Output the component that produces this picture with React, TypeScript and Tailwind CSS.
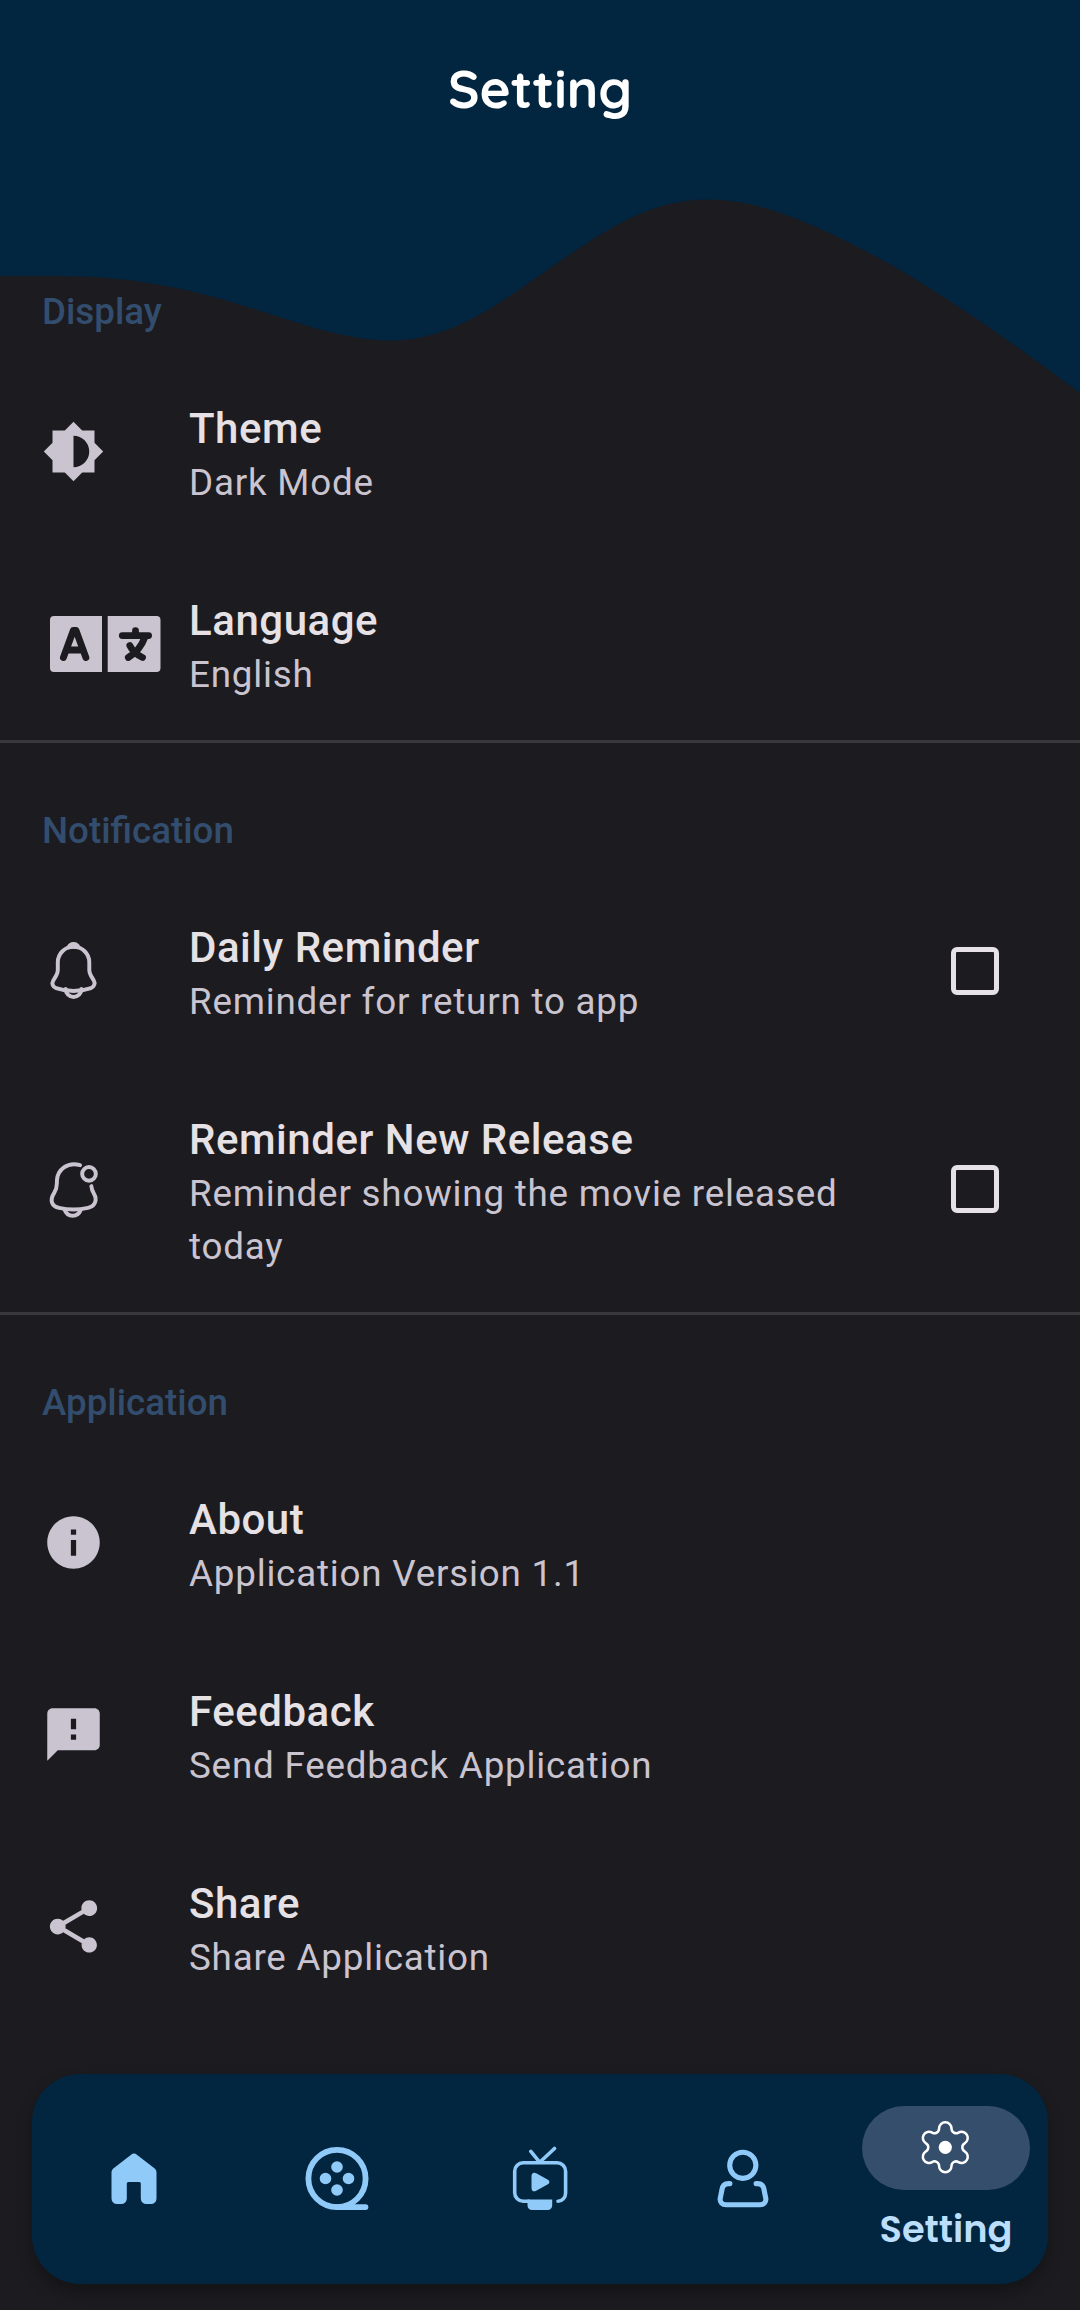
import React from "react";
import { MdBrightnessMedium, MdInfo, MdFeedback, MdShare } from "react-icons/md";

const ICON = "#cac4d0";

function Bell() {
  return (
    <svg width="63" height="63" viewBox="0 0 24 24" fill="none" stroke={ICON} strokeWidth="1.5" strokeLinecap="round" strokeLinejoin="round">
      <path d="M12.02 2.91c-3.31 0-6 2.69-6 6v2.89c0 .61-.26 1.54-.57 2.06L4.3 15.77c-.71 1.18-.22 2.49 1.08 2.93 4.31 1.44 8.96 1.44 13.27 0 1.21-.4 1.74-1.83 1.08-2.93l-1.15-1.91c-.3-.52-.56-1.45-.56-2.06V8.91c0-3.3-2.7-6-6-6z" />
      <path d="M13.87 3.2a6.754 6.754 0 0 0-3.7 0c.29-.74 1.01-1.26 1.85-1.26.84 0 1.56.52 1.85 1.26zM15.02 19.06c0 1.65-1.35 3-3 3-.82 0-1.58-.34-2.12-.88a3.01 3.01 0 0 1-.88-2.12" />
    </svg>
  );
}

function BellDot() {
  return (
    <svg width="63" height="63" viewBox="0 0 24 24" fill="none" stroke={ICON} strokeWidth="1.5" strokeLinecap="round">
      <path d="M14.5 2.75C9.600 1.300 6 4.600 5.700 8.400C5.600 10.500 5.900 11.300 4.700 13.200C2.700 16.300 3.800 18.400 6.500 19C10.200 19.800 13.800 19.800 17.500 19C20.200 18.400 21.200 16 19.800 13.600C19 12.300 18.900 11.800 18.800 10.700" />
      <circle cx="17.900" cy="6.050" r="2.600" />
      <path d="M8.600 19.700C9.100 21.200 10.200 22 11.700 22S14.200 21.200 14.800 19.700" />
    </svg>
  );
}

function Language() {
  return (
    <svg width="111" height="56" viewBox="0 0 111 56">
      <path fill={ICON} d="M4 0H52V56H4a4 4 0 0 1-4-4V4a4 4 0 0 1 4-4ZM57.700 0H106.500a4 4 0 0 1 4 4v48a4 4 0 0 1-4 4H57.700Z" />
      <g fill="none" stroke="#1c1b1f" strokeWidth="6.800" strokeLinecap="round" strokeLinejoin="round">
        <path d="M13.400 41.500L23.300 14.500H26L35.900 41.500M18.500 34H31" />
        <path d="M72.300 19.600H98.600M85.500 14.700v5M95 21C92 29 86 37 78.300 41.500M79.800 29.500C82 34 86 38.500 92.500 41.500" />
      </g>
    </svg>
  );
}

type RowProps = { icon: React.ReactNode; title: string; text: string; check?: boolean; tall?: boolean };

function Row({ icon, title, text, check, tall }: RowProps) {
  return (
    <div className={tall ? "flex h-[245px] items-center" : "flex h-[192px] items-center"}>
      <div className="flex w-[189px] shrink-0 items-center pl-[42px]">{icon}</div>
      <div className="w-[670px] pt-[6px]">
        <div className="text-[42px] leading-[55px] font-medium tracking-[0.53px] text-[#e6e1e5]">{title}</div>
        <div className="text-[36.75px] leading-[53px] tracking-[0.8px] text-[#cac4d0]">{text}</div>
      </div>
      {check && <div className="ml-[92px] size-[48px] rounded-[6px] border-[5px] border-[#e6e1e5]" />}
    </div>
  );
}

function Heading({ children }: { children: string }) {
  return <h2 className="pl-[42px] text-[36.75px] leading-[50px] font-medium text-[#334d6e]">{children}</h2>;
}

function HomeIcon() {
  return (
    <svg width="66" height="66" viewBox="0 0 66 66" fill="#90caf9">
      <path d="M29.800 8.900a5 5 0 0 1 6.400 0L53.700 22.400a5 5 0 0 1 1.800 3.700V52.500a5.500 5.500 0 0 1-5.500 5.500H45.300a5.500 5.500 0 0 1-5.500-5.500V37.500a1.500 1.500 0 0 0-1.500-1.500h-11A1.500 1.500 0 0 0 25.800 37.500V52.500a5.500 5.500 0 0 1-5.500 5.500H16a5.500 5.500 0 0 1-5.500-5.500V26.100a5 5 0 0 1 1.800-3.700Z" />
    </svg>
  );
}

function ReelIcon() {
  return (
    <svg width="66" height="66" viewBox="0 0 66 66" fill="#90caf9">
      <circle cx="33" cy="32.500" r="28.600" fill="none" stroke="#90caf9" strokeWidth="5.800" />
      <path d="M33 61.100H61.500" stroke="#90caf9" strokeWidth="5.800" strokeLinecap="round" />
      <circle cx="33" cy="21" r="5.800" />
      <circle cx="33" cy="44" r="5.800" />
      <circle cx="21.500" cy="32.500" r="5.800" />
      <circle cx="44.500" cy="32.500" r="5.800" />
    </svg>
  );
}

function TvIcon() {
  return (
    <svg width="66" height="66" viewBox="0 0 66 66" fill="none" stroke="#90caf9" strokeWidth="3.600" strokeLinecap="round" strokeLinejoin="round">
      <path d="M23.800 5.300L32.800 16.300L47.500 2.500M51 55.200a8 8 0 0 0 7.600-8V25.300a8.500 8.500 0 0 0-8.500-8.500H16.200a8.500 8.500 0 0 0-8.500 8.500V46.700a8.500 8.500 0 0 0 8.500 8.500H22" />
      <path fill="#90caf9" stroke="none" d="M20.500 53.400H45.200V59.500a4.500 4.500 0 0 1-4.500 4.500H25a4.500 4.500 0 0 1-4.500-4.500ZM24.500 30.200c0-3 2-4.300 4.700-2.900l11.300 6.200c2.600 1.500 2.600 3.700 0 5.100l-11.300 6.200c-2.700 1.400-4.700.1-4.700-2.800Z" />
    </svg>
  );
}

function UserIcon() {
  return (
    <svg width="66" height="66" viewBox="0 0 66 66" fill="none" stroke="#90caf9" strokeWidth="5.100" strokeLinecap="round">
      <circle cx="32.800" cy="19.300" r="13.100" />
      <path d="M19.900 37.600H18.500c-4 0-6.200 2.600-6.600 6.500L10.200 52.500c-.5 3.800 2 6.300 5.800 6.300H50c3.800 0 6.300-2.500 5.800-6.300L54.100 44.100c-.4-3.900-2.600-6.500-6.600-6.500H46.100" />
    </svg>
  );
}

function GearIcon() {
  return (
    <svg width="66" height="66" viewBox="-32.300 -32.300 66 66" fill="none" stroke="#fff" strokeWidth="2.500">
      <path d="M-6.200-18.750A6.200 6.200 0 0 1 6.200-18.750A4.600 4.600 0 0 0 13.140-14.750A6.200 6.200 0 0 1 19.340-4A4.600 4.600 0 0 0 19.340 4A6.200 6.200 0 0 1 13.140 14.750A4.600 4.600 0 0 0 6.200 18.750A6.200 6.200 0 0 1-6.200 18.750A4.600 4.600 0 0 0-13.140 14.750A6.200 6.200 0 0 1-19.340 4A4.600 4.600 0 0 0-19.340-4A6.200 6.200 0 0 1-13.140-14.750A4.600 4.600 0 0 0-6.200-18.750Z" />
      <circle r="6.600" fill="#fff" stroke="none" />
    </svg>
  );
}

export default function App() {
  return (
    <div className="relative flex h-[2310px] w-[1080px] flex-col overflow-hidden bg-[#1c1b1f] font-[Roboto,sans-serif]">
      <svg className="absolute top-0 left-0" width="1080" height="400" viewBox="0 0 1080 400">
        <path fill="#022540" d="M0 0H1080V393C1010 341 940 291 873 255C815 224 760 199.500 708 199.500C640 199.500 590 241 520 289C475 320 437 340.500 390 340.500C355 340.500 320 330 283 318.300C215 296 150 276 60 276H0Z" />
      </svg>
      <header className="relative flex h-[287px] justify-center pt-[53px]">
        <h1 className="font-[Quicksand,Lato,sans-serif] text-[53px] leading-[70px] font-bold text-white">Setting</h1>
      </header>
      <main className="relative flex-1">
        <section className="h-[453px]">
          <Heading>Display</Heading>
          <div className="pt-[18.5px]">
            <Row icon={<MdBrightnessMedium size={63} color={ICON} />} title="Theme" text="Dark Mode" />
            <Row icon={<span className="pl-2"><Language /></span>} title="Language" text="English" />
          </div>
        </section>
        <section className="h-[572px] border-t-[3px] border-[#38373a] pt-[63px]">
          <Heading>Notification</Heading>
          <div className="pt-[18.5px]">
            <Row icon={<Bell />} title="Daily Reminder" text="Reminder for return to app" check />
            <Row icon={<BellDot />} title="Reminder New Release" text="Reminder showing the movie released today" check tall />
          </div>
        </section>
        <section className="border-t-[3px] border-[#38373a] pt-[63px]">
          <Heading>Application</Heading>
          <div className="pt-[18.5px]">
            <Row icon={<MdInfo size={63} color={ICON} />} title="About" text="Application Version 1.1" />
            <Row icon={<MdFeedback size={63} color={ICON} />} title="Feedback" text="Send Feedback Application" />
            <Row icon={<MdShare size={63} color={ICON} />} title="Share" text="Share Application" />
          </div>
        </section>
      </main>
      <nav className="relative mx-8 mb-[26px] flex h-[210px] shrink-0 items-center rounded-[48px] bg-[#022540] shadow-[0_8px_16px_rgba(0,0,0,0.3)]">
        <div className="flex w-[203px] justify-center"><HomeIcon /></div>
        <div className="flex w-[203px] justify-center"><ReelIcon /></div>
        <div className="flex w-[203px] justify-center"><TvIcon /></div>
        <div className="flex w-[203px] justify-center"><UserIcon /></div>
        <div className="flex w-[204px] flex-col items-center pt-[3px]">
          <div className="flex h-[84px] w-[168px] items-center justify-center rounded-full bg-[#354e6c]">
            <GearIcon />
          </div>
          <span className="pt-[13px] font-[Poppins,Lato,sans-serif] text-[36.75px] leading-[52px] font-semibold text-[#bbdefb]">Setting</span>
        </div>
      </nav>
    </div>
  );
}
